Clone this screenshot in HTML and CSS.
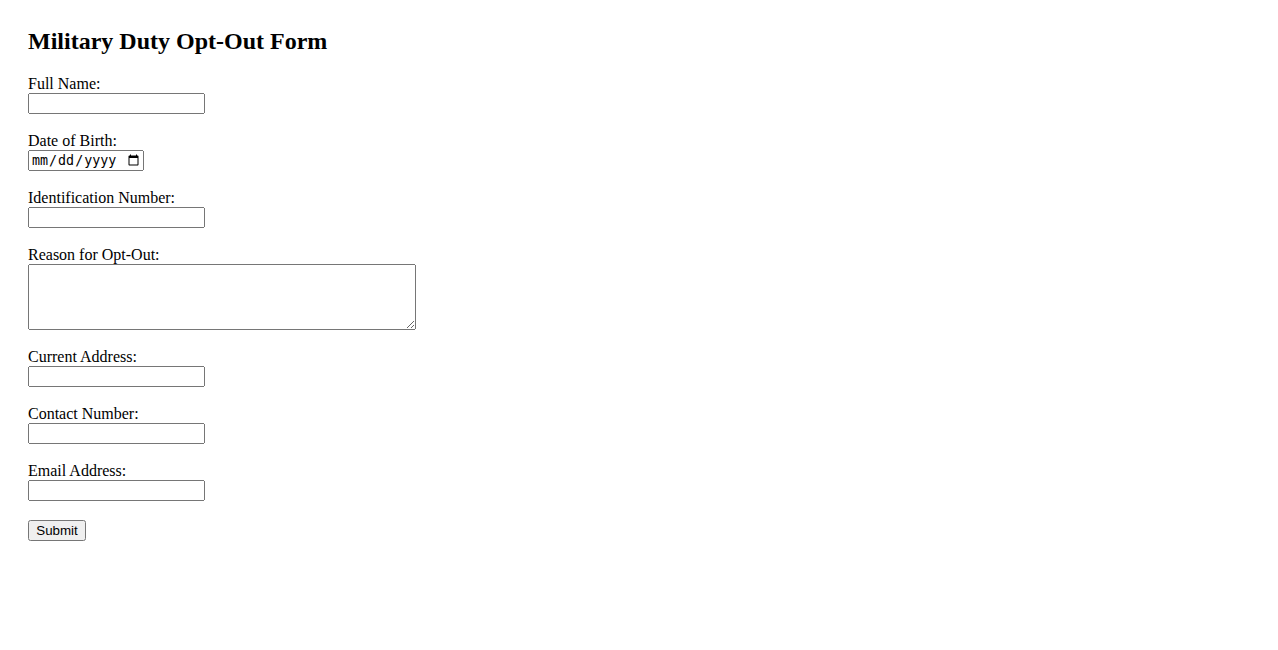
FILE: index.html
```html
<!DOCTYPE html>
<html lang="en">
<head>
<meta charset="utf-8">
<title>Military Duty Opt-Out Form</title>
<link rel="stylesheet" href="styles.css">
</head>
<body>
<div class="page">
  <h2 class="title">Military Duty Opt-Out Form</h2>
  <form class="form">
    <div class="field">
      <label for="fullName">Full Name:</label>
      <input class="text-input" type="text" id="fullName" name="fullName">
    </div>
    <div class="field">
      <label for="dob">Date of Birth:</label>
      <input class="date-input" type="date" id="dob" name="dob">
    </div>
    <div class="field">
      <label for="idNumber">Identification Number:</label>
      <input class="text-input" type="text" id="idNumber" name="idNumber">
    </div>
    <div class="field">
      <label for="reason">Reason for Opt-Out:</label>
      <textarea class="reason" id="reason" name="reason"></textarea>
    </div>
    <div class="field">
      <label for="address">Current Address:</label>
      <input class="text-input" type="text" id="address" name="address">
    </div>
    <div class="field">
      <label for="contact">Contact Number:</label>
      <input class="text-input" type="tel" id="contact" name="contact">
    </div>
    <div class="field">
      <label for="email">Email Address:</label>
      <input class="text-input" type="email" id="email" name="email">
    </div>
    <div class="actions">
      <button class="submit" type="submit">Submit</button>
    </div>
  </form>
</div>
</body>
</html>
```

FILE: styles.css
```css
html, body {
  margin: 0;
  padding: 0;
  background: #ffffff;
}

body {
  font-family: "Liberation Serif", "Times New Roman", serif;
  font-size: 16px;
  color: #000000;
}

.page {
  padding: 28px;
}

.title {
  margin: 0 0 19.5px 0;
  font-size: 24px;
  font-weight: bold;
  line-height: 27.6px;
}

.form {
  display: flex;
  flex-direction: column;
  align-items: flex-start;
}

.field {
  display: flex;
  flex-direction: column;
  align-items: flex-start;
  margin-bottom: 18px;
}

.field label {
  display: block;
  line-height: 18px;
}

.text-input {
  box-sizing: border-box;
  width: 177px;
  height: 21px;
  margin: 0;
  font-family: "Liberation Sans", Arial, sans-serif;
  font-size: 13.33px;
}

.date-input {
  box-sizing: border-box;
  width: 116px;
  height: 21px;
  margin: 0;
  font-size: 13.33px;
}

.reason {
  box-sizing: border-box;
  width: 388px;
  height: 66px;
  margin: 0;
  font-family: "Liberation Mono", monospace;
  font-size: 13.33px;
}

.actions {
  margin-top: 1px;
}

.submit {
  box-sizing: border-box;
  height: 21px;
  width: 58px;
  margin: 0;
  padding: 1px 6px;
  font-family: "Liberation Sans", Arial, sans-serif;
  font-size: 13.33px;
}
```
